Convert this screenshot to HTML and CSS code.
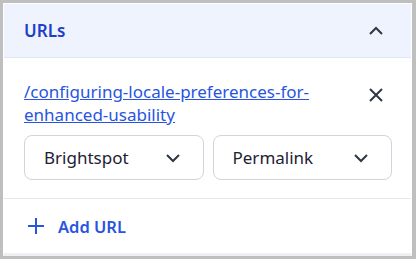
FILE: index.html
```html
<!DOCTYPE html>
<html>
<head>
<meta charset="utf-8">
<link rel="stylesheet" href="styles.css">
</head>
<body>
<div class="panel">
  <div class="header">
    <span class="title">URLs</span>
    <svg class="icon" width="16" height="16" viewBox="0 0 16 16"><path d="M2 11 L8 5 L14 11" fill="none" stroke="#2f3745" stroke-width="2"/></svg>
  </div>
  <div class="body">
    <div class="url-row">
      <a class="link" href="#">/configuring-locale-preferences-for-enhanced-usability</a>
      <svg class="icon close" width="16" height="16" viewBox="0 0 16 16"><path d="M2 2 L14 14 M14 2 L2 14" fill="none" stroke="#2f3745" stroke-width="2"/></svg>
    </div>
    <div class="selects">
      <div class="select"><span>Brightspot</span><svg width="16" height="16" viewBox="0 0 16 16"><path d="M2 5 L8 11 L14 5" fill="none" stroke="#2f3745" stroke-width="2"/></svg></div>
      <div class="select"><span>Permalink</span><svg width="16" height="16" viewBox="0 0 16 16"><path d="M2 5 L8 11 L14 5" fill="none" stroke="#2f3745" stroke-width="2"/></svg></div>
    </div>
  </div>
  <div class="footer">
    <svg width="16" height="16" viewBox="0 0 16 16"><path d="M8 0 V16 M0 8 H16" fill="none" stroke="#2855e0" stroke-width="2"/></svg>
    <span class="add">Add URL</span>
  </div>
</div>
</body>
</html>
```

FILE: styles.css
```css
html, body {
  margin: 0;
  padding: 0;
  background: #bfbfbf;
  font-family: "Noto Sans", sans-serif;
}
.panel {
  margin: 3px 4px 0 3px;
  width: 407px;
  height: 249px;
  border: 1px solid #ffffff;
  border-bottom: 3px solid #f0f0f4;
  background: #ffffff;
  display: flex;
  flex-direction: column;
}
.header {
  height: 53px;
  background: #eef3fd;
  border-bottom: 1px solid #e1e7f4;
  display: flex;
  align-items: center;
  justify-content: space-between;
  padding: 0 27px 0 20px;
}
.title {
  color: #1e40c8;
  font-weight: 600;
  font-size: 17px;
}
.body {
  padding: 22px 19px 18px 20px;
  border-bottom: 1px solid #e8e8ec;
}
.url-row {
  display: flex;
  justify-content: space-between;
  align-items: flex-start;
}
.link {
  color: #2855e0;
  font-size: 17px;
  line-height: 23px;
  width: 300px;
}
.close {
  margin: 7px 8px 0 0;
}
.selects {
  display: flex;
  gap: 9px;
  margin-top: 9px;
}
.select {
  flex: 1;
  height: 43px;
  border: 1px solid #d2d3dc;
  border-radius: 8px;
  display: flex;
  align-items: center;
  justify-content: space-between;
  padding: 0 22px 0 19px;
  font-size: 17px;
  color: #1b2233;
}
.footer {
  flex: 1;
  display: flex;
  align-items: center;
  padding: 0 0 0 24px;
  gap: 14px;
}
.add {
  color: #2855e0;
  font-weight: 600;
  font-size: 16.5px;
}
```
